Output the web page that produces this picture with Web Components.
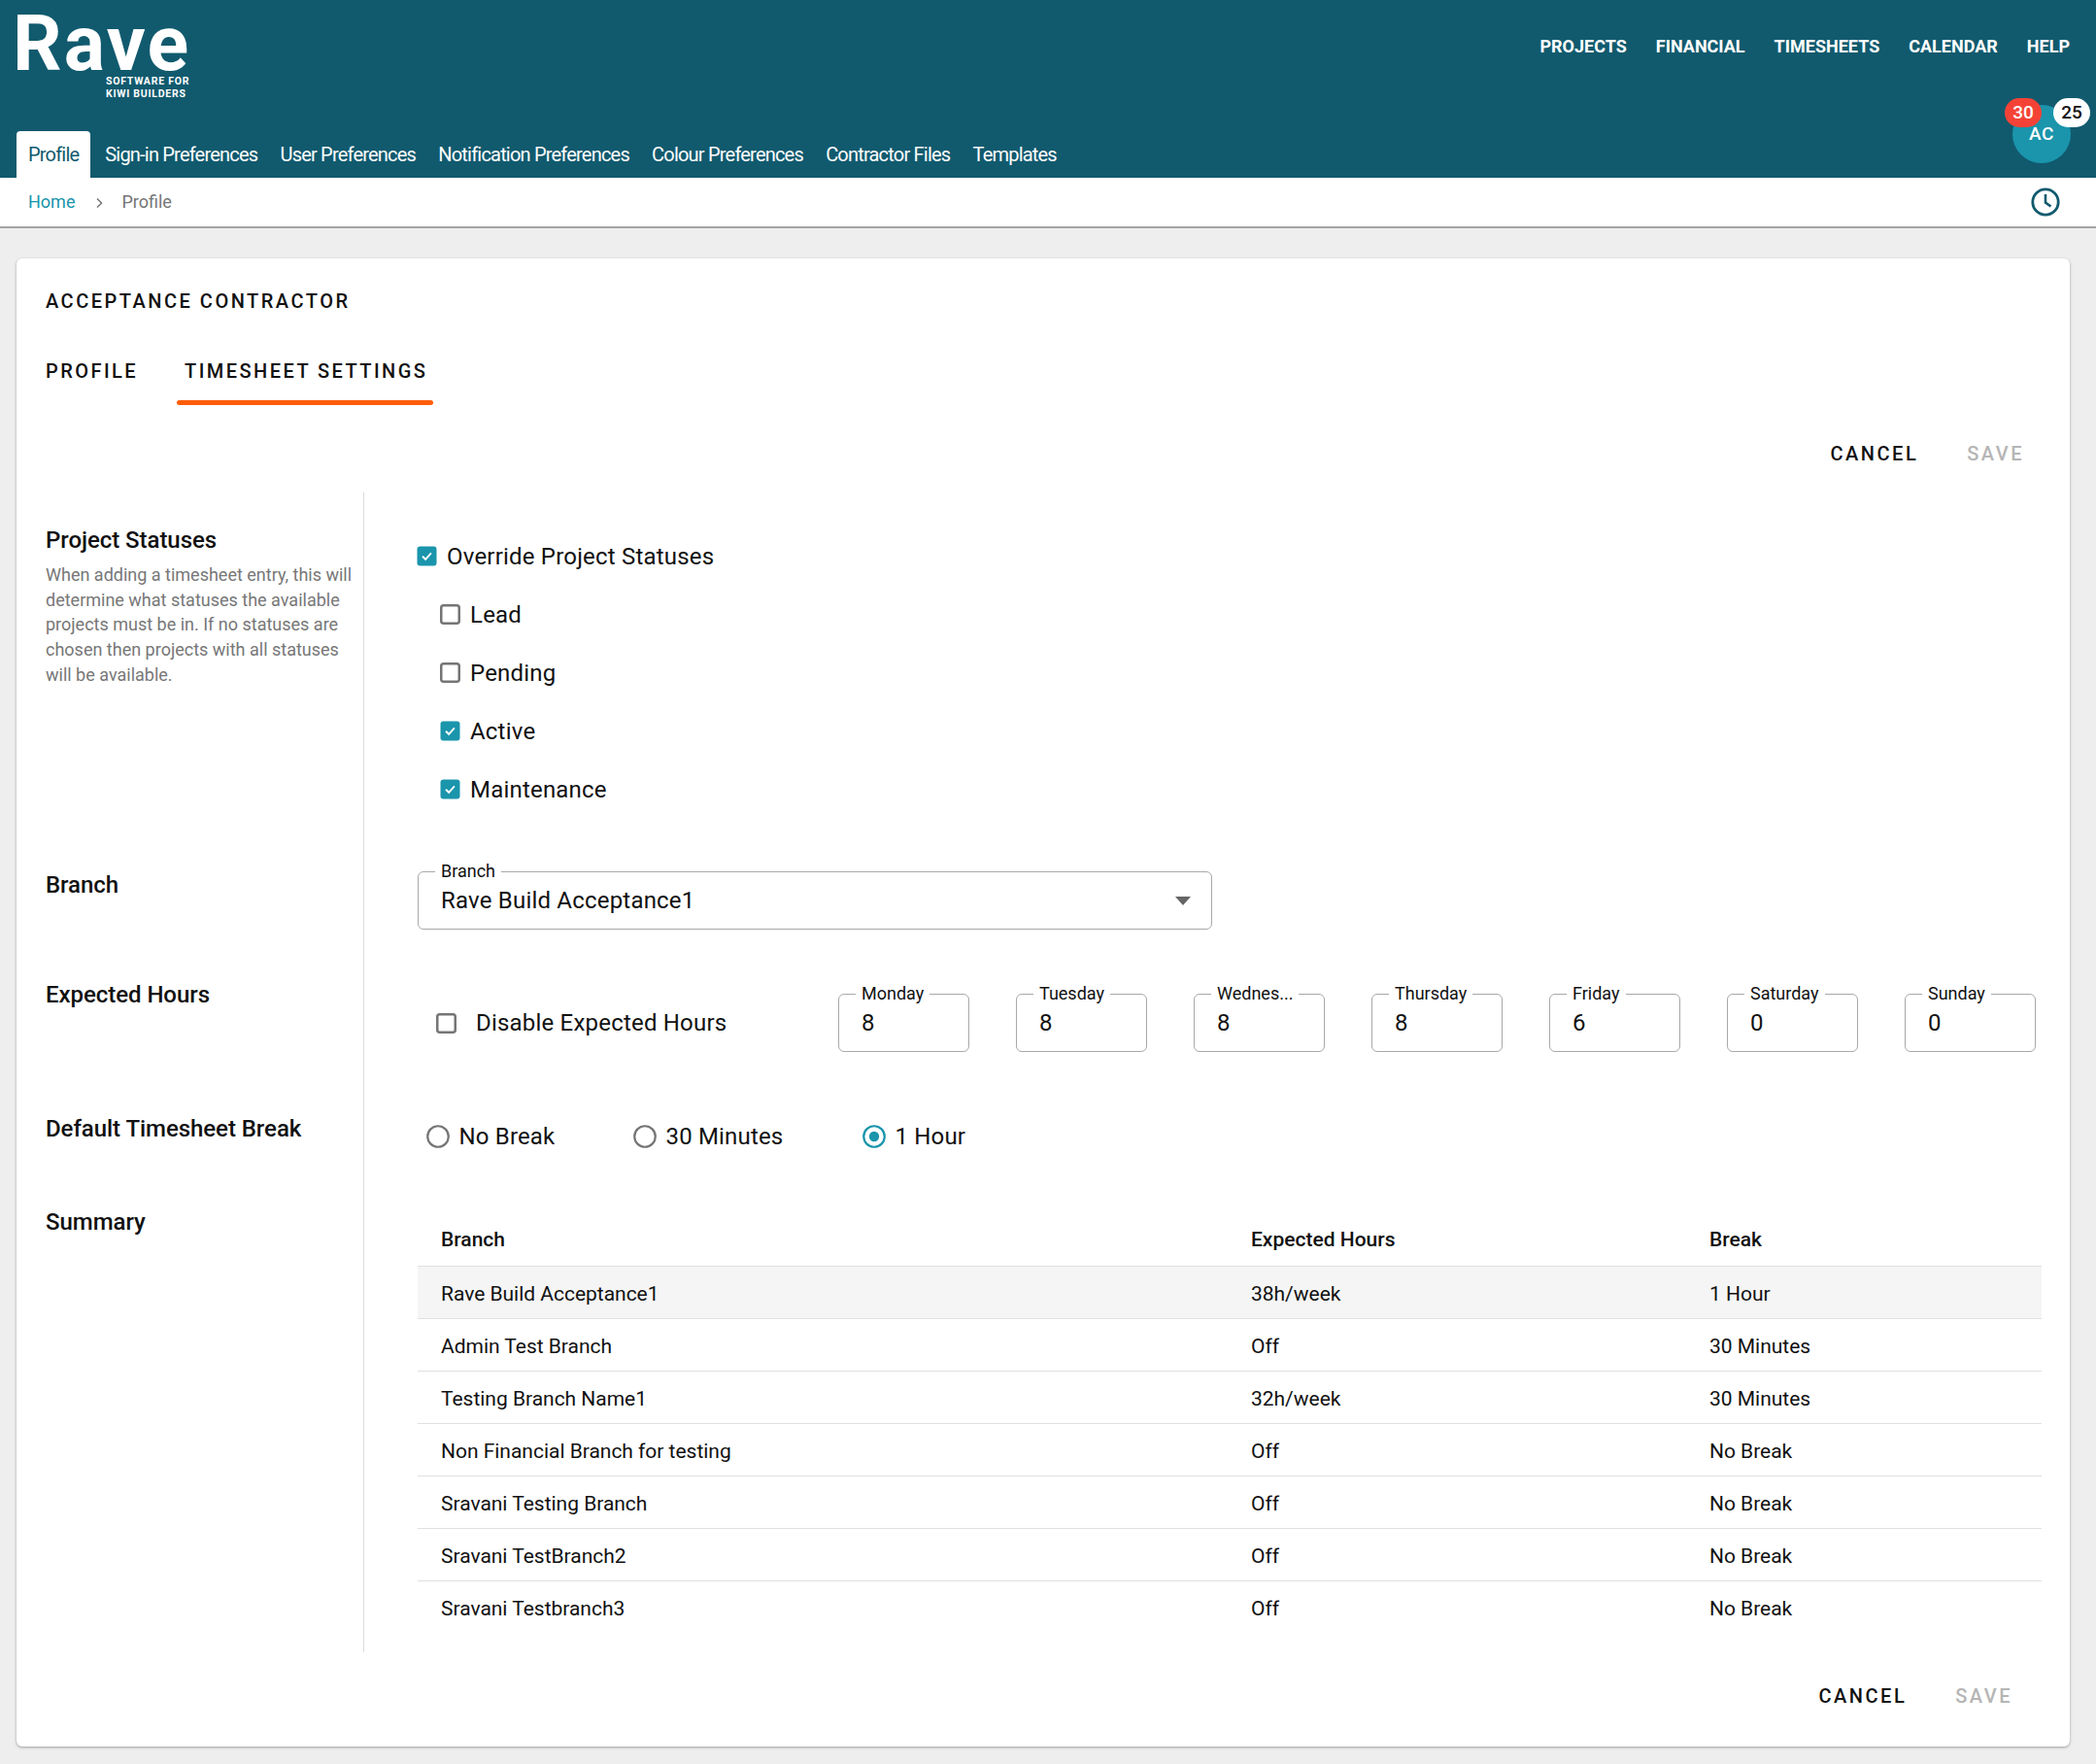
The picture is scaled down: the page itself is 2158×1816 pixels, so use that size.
<!DOCTYPE html>
<html lang="en"><head><meta charset="utf-8"><title>Profile</title>
<style>
html,body{margin:0;padding:0;background:#eeeeee;font-family:Roboto,sans-serif;color:#111}
rave-page{display:block;width:2158px;min-height:1816px}
</style></head><body>
<rave-page></rave-page>
<script>
function el(name, css, html){
  customElements.define(name, class extends HTMLElement{
    constructor(){super();const s=this.attachShadow({mode:'open'});
      s.innerHTML='<style>'+css+'</style>'+(typeof html==='function'?html(this):html);}
    connectedCallback(){ if(typeof html==='function'){ this.shadowRoot.innerHTML='<style>'+css+'</style>'+html(this);} }
  });
}
const a=(e,n,d='')=>e.getAttribute(n)??d;

el('rave-logo',`:host{display:block;width:190px;height:100px;color:#fff;position:relative}
 .r{display:block;font:700 79px/79px Roboto,sans-serif;letter-spacing:2.2px;margin:6px 0 0 -4px;white-space:nowrap}
 .s{position:absolute;left:92px;top:78px;font:700 10.5px/12.5px Roboto,sans-serif;letter-spacing:.75px;white-space:nowrap}`,
 `<span class="r">Rave</span><span class="s">SOFTWARE FOR<br>KIWI BUILDERS</span>`);

el('rave-header',`:host{display:block;height:183px;background:#115a6e;position:relative;box-sizing:border-box;padding-left:17px}
 .top{height:135px;display:flex;justify-content:space-between;align-items:flex-start;box-sizing:border-box;padding-right:27px}
 nav{display:flex;gap:30px;margin-top:37px;font:700 18px/22px Roboto,sans-serif;letter-spacing:0;color:#fff}
 .tabs{display:flex;height:48px;gap:0;font:400 20px/48px Roboto,sans-serif;letter-spacing:-.8px;color:#fff}
 .tabs span{padding:0 11.6px;box-sizing:border-box}
 .tabs .on{background:#fff;color:#115a6e;border-radius:4px 4px 0 0;margin-right:3.4px;padding:0 12px}
 .av{position:absolute;left:2072px;top:108px;width:60px;height:60px;border-radius:50%;background:#1a95ac;color:#fff;font:500 19px/60px Roboto,sans-serif;letter-spacing:.5px;text-align:center}
 .b{position:absolute;top:101px;width:38px;height:30px;border-radius:15px;font:500 19px/30px Roboto,sans-serif;text-align:center}
 .red{left:2064px;background:#f44336;color:#fff}.wh{left:2114px;background:#fff;color:#111}`,
 `<div class="top"><rave-logo></rave-logo><nav><span>PROJECTS</span><span>FINANCIAL</span><span>TIMESHEETS</span><span>CALENDAR</span><span>HELP</span></nav></div>
 <div class="tabs"><span class="on">Profile</span><span>Sign-in Preferences</span><span>User Preferences</span><span>Notification Preferences</span><span>Colour Preferences</span><span>Contractor Files</span><span>Templates</span></div>
 <div class="av">AC</div><div class="b red">30</div><div class="b wh">25</div>`);

el('rave-crumbs',`:host{display:flex;align-items:center;height:52px;box-sizing:border-box;background:#fff;border-bottom:2px solid #a3a3a3;padding:0 37px 0 29px;font:400 18px/24px Roboto,sans-serif;color:#757575}
 .h{color:#1a95ac}.c{margin:1px 18px 0 21px;display:flex}.sp{flex:1} svg{display:block}`,
 `<span class="h">Home</span><span class="c"><svg width="9" height="12" viewBox="0 0 9 12"><path d="M2 1.5l4.5 4.5L2 10.5" fill="none" stroke="#777" stroke-width="1.5"/></svg></span><span>Profile</span><span class="sp"></span>
 <svg width="30" height="30" viewBox="0 0 30 30"><circle cx="15" cy="15" r="13.2" fill="none" stroke="#115a6e" stroke-width="2.8"/><path d="M15 7v8.5l5.5 4" fill="none" stroke="#115a6e" stroke-width="2.6"/></svg>`);

el('rave-actions',`:host{display:flex;justify-content:flex-end;gap:50px;font:500 20px/28px Roboto,sans-serif;letter-spacing:2.5px;color:#111}
 .d{color:#b5b5b5}`,`<span>CANCEL</span><span class="d">SAVE</span>`);

el('rave-tabs',`:host{display:flex;height:61px;font:500 20px/28px Roboto,sans-serif;letter-spacing:2.45px;color:#111}
 span{display:block;box-sizing:border-box;height:61px;padding:12px 6px 0 8px;position:relative}
 .p{padding-left:0;padding-right:0;margin-right:40px}
 .on::after{content:"";position:absolute;left:0;right:0;bottom:0;height:5px;border-radius:2.5px;background:#ff5d0a}`,
 `<span class="p">PROFILE</span><span class="on">TIMESHEET SETTINGS</span>`);

el('rave-section',`:host{display:grid;grid-template-columns:328px 1fr;height:var(--h)}
 .l{box-sizing:border-box;border-right:1px solid #dcdcdc;padding-top:35px;padding-right:8px}
 .t{font:500 24px/28px Roboto,sans-serif;color:#111;letter-spacing:-.05px}
 .d{font:400 18px/25.7px Roboto,sans-serif;color:#777;margin-top:9px;letter-spacing:0}
 .r{padding-left:55px;padding-top:var(--pt);box-sizing:border-box}`,
 e=>`<div class="l"><div class="t">${a(e,'title')}</div>${a(e,'desc')?`<div class="d">${a(e,'desc')}</div>`:''}</div><div class="r"><slot></slot></div>`);

const CHECK='<svg width="21" height="21" viewBox="0 0 21 21"><rect x="0.5" y="0.5" width="20" height="20" rx="3" fill="#1a95ac"/><path d="M6 10.8l3.1 3 5.8-6.4" fill="none" stroke="#fff" stroke-width="1.9"/></svg>';
const BOX='<svg width="21" height="21" viewBox="0 0 21 21"><rect x="1.25" y="1.25" width="18.5" height="18.5" rx="2.5" fill="#fff" stroke="#757575" stroke-width="2.5"/></svg>';
el('rave-check',`:host{display:flex;align-items:center;height:60px;font:400 24px/28px Roboto,sans-serif;letter-spacing:.2px;color:#111;gap:var(--g,10px)}
 svg{display:block;flex:none;margin-left:-1px}`,e=>(e.hasAttribute('checked')?CHECK:BOX)+`<span><slot></slot></span>`);

el('rave-statuses',`:host{display:block;margin-top:35.5px}
 .sub{padding-left:24px;display:block}`,`<slot name="top"></slot><div class="sub"><slot></slot></div>`);

el('rave-field',`:host{display:block;position:relative;box-sizing:border-box;height:60px;border:1.5px solid #a8a8a8;border-radius:6px;background:#fff;font:400 24px/28px Roboto,sans-serif;color:#111;letter-spacing:.2px;padding:15px 23px}
 .lb{position:absolute;left:17px;top:-11px;padding:0 6px;background:#fff;font:400 18px/20px Roboto,sans-serif;letter-spacing:0;white-space:nowrap;max-width:calc(100% - 46px);overflow:hidden;text-overflow:ellipsis}
 .ar{position:absolute;right:21px;top:25px;width:0;height:0;border:8px solid transparent;border-top:9px solid #666;border-bottom:0}`,
 e=>`<span class="lb">${a(e,'label')}</span><slot></slot>${e.hasAttribute('select')?'<span class="ar"></span>':''}`);

el('rave-hours',`:host{display:grid;grid-template-columns:repeat(7,135px);column-gap:48px;}`,`<slot></slot>`);

el('rave-radio',`:host{display:flex;align-items:center;gap:9.5px;font:400 24px/28px Roboto,sans-serif;letter-spacing:.17px;color:#111}
 svg{display:block;flex:none}`,e=>(e.hasAttribute('checked')
 ?'<svg width="24" height="24" viewBox="0 0 24 24"><circle cx="12" cy="12" r="10.75" fill="none" stroke="#1a95ac" stroke-width="2.2"/><circle cx="12" cy="12" r="5.2" fill="#1a95ac"/></svg>'
 :'<svg width="24" height="24" viewBox="0 0 24 24"><circle cx="12" cy="12" r="10.75" fill="none" stroke="#757575" stroke-width="2.2"/></svg>')+'<span><slot></slot></span>');

el('rave-table',`:host{display:block;font:400 21px/28px Roboto,sans-serif;color:#111}
 .row{display:grid;grid-template-columns:834px 472px 1fr;height:54px;align-items:center;padding-left:24px;border-bottom:1px solid #e0e0e0;box-sizing:border-box;letter-spacing:-.02px}
 .row span{padding-top:2px}
 .h{font-weight:500;height:57px;letter-spacing:0}
 .h span{padding-top:1px}
 .row.first{background:#f5f5f5}
 .row:last-child{border-bottom:0}`,
 ()=>{const rows=[['Rave Build Acceptance1','38h/week','1 Hour'],['Admin Test Branch','Off','30 Minutes'],['Testing Branch Name1','32h/week','30 Minutes'],['Non Financial Branch for testing','Off','No Break'],['Sravani Testing Branch','Off','No Break'],['Sravani TestBranch2','Off','No Break'],['Sravani Testbranch3','Off','No Break']];
 return `<div class="row h"><span>Branch</span><span>Expected Hours</span><span>Break</span></div>`+rows.map((r,i)=>`<div class="row ${i==0?'first':''}"><span>${r[0]}</span><span>${r[1]}</span><span>${r[2]}</span></div>`).join('');});

el('rave-card',`:host{display:block;margin:31px 27px 19px 17px;width:2114px;height:1532px;box-sizing:border-box;background:#fff;border-radius:6px;box-shadow:0 1px 3px rgba(0,0,0,.35);padding:0 29px 0 30px}
 h1{margin:0;padding-top:30px;font:500 20px/28px Roboto,sans-serif;letter-spacing:2.5px;color:#111}
 .tabs{margin-top:32px}
 .ta{padding:36px 18px 26px 0}`,
 `<h1>ACCEPTANCE CONTRACTOR</h1><div class="tabs"><rave-tabs></rave-tabs></div><div class="ta"><rave-actions></rave-actions></div><slot></slot>`);

customElements.define('rave-page',class extends HTMLElement{
  constructor(){super();const s=this.attachShadow({mode:'open'});
  const days=[['Monday',8],['Tuesday',8],['Wednes...',8],['Thursday',8],['Friday',6],['Saturday',0],['Sunday',0]];
  s.innerHTML=`<style>:host{display:block}
   .hrs{display:flex;align-items:center;height:60px;margin-left:20px;--g:20px}
   .hrs rave-check{width:413px}
   .rad{display:flex;height:24px;margin-left:9px}
   .fa{display:block;padding:31px 30px 0 0}
   .s1{--h:355px;--pt:0px}.s2{--h:113px;--pt:35px}.s3{--h:138px;--pt:48px}.s4{--h:96px;--pt:45px}.s5{--h:492px;--pt:38px}
   </style>
   <rave-header></rave-header><rave-crumbs></rave-crumbs>
   <rave-card>
    <rave-section class="s1" title="Project Statuses" desc="When adding a timesheet entry, this will determine what statuses the available projects must be in. If no statuses are chosen then projects with all statuses will be available.">
      <rave-statuses><rave-check slot="top" checked>Override Project Statuses</rave-check><rave-check>Lead</rave-check><rave-check>Pending</rave-check><rave-check checked>Active</rave-check><rave-check checked>Maintenance</rave-check></rave-statuses>
    </rave-section>
    <rave-section class="s2" title="Branch"><rave-field style="width:818px" label="Branch" select>Rave Build Acceptance1</rave-field></rave-section>
    <rave-section class="s3" title="Expected Hours"><div class="hrs"><rave-check>Disable Expected Hours</rave-check><rave-hours>${days.map(d=>`<rave-field label="${d[0]}">${d[1]}</rave-field>`).join('')}</rave-hours></div></rave-section>
    <rave-section class="s4" title="Default Timesheet Break"><div class="rad"><rave-radio style="width:213px">No Break</rave-radio><rave-radio style="width:236px">30 Minutes</rave-radio><rave-radio checked>1 Hour</rave-radio></div></rave-section>
    <rave-section class="s5" title="Summary"><rave-table></rave-table></rave-section>
    <div class="fa"><rave-actions></rave-actions></div>
   </rave-card>`;
  }
});
</script>
</body></html>
